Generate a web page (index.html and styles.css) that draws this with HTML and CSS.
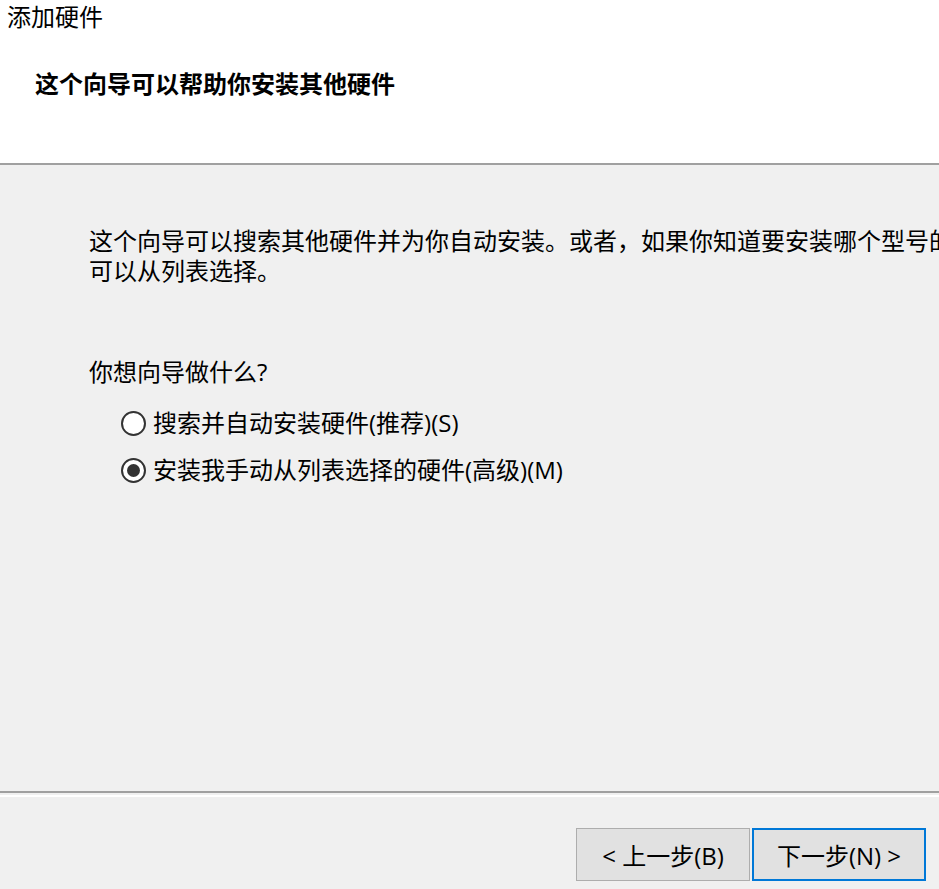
FILE: index.html
```html
<!DOCTYPE html>
<html lang="zh-CN">
<head>
    <meta charset="UTF-8">
    <title>添加硬件</title>
    <link rel="stylesheet" href="styles.css">
</head>
<body>
    <div class="header">
        <div class="window-title">添加硬件</div>
        <div class="heading">这个向导可以帮助你安装其他硬件</div>
    </div>
    <div class="content">
        <p class="intro">这个向导可以搜索其他硬件并为你自动安装。或者，如果你知道要安装哪个型号的<br>可以从列表选择。</p>

        <div class="question">你想向导做什么?</div>
        <div class="options">
            <div class="option">
                <span class="radio"></span>
                <span>搜索并自动安装硬件(推荐)(S)</span>
            </div>
            <div class="option">
                <span class="radio checked"></span>
                <span>安装我手动从列表选择的硬件(高级)(M)</span>
            </div>
        </div>
    </div>
    <div class="footer">
        <button class="btn">&lt; 上一步(B)</button>
        <button class="btn default">下一步(N) &gt;</button>
    </div>
</body>
</html>
```

FILE: styles.css
```css
html, body {
    margin: 0;
    padding: 0;
}
body {
    width: 939px;
    height: 889px;
    overflow: hidden;
    font-family: "Open Sans", "Noto Sans CJK SC", sans-serif;
    font-size: 24px;
    line-height: 30px;
    color: #000;
    background-color: #f0f0f0;
}
.header {
    background-color: #fff;
    height: 163px;
    border-bottom: 2px solid #a0a0a0;
    box-sizing: content-box;
}
.window-title {
    padding: 2px 0 0 7px;
}
.heading {
    font-weight: bold;
    margin: 37px 0 0 35px;
}
.content {
    height: 626px;
    padding-left: 89px;
    overflow: hidden;
}
.intro {
    margin: 61px 0 0 0;
    white-space: nowrap;
}
.question {
    margin-top: 71px;
}
.options {
    margin-top: 21px;
    padding-left: 32px;
    display: flex;
    flex-direction: column;
    gap: 17px;
}
.option {
    display: flex;
    align-items: center;
    gap: 7px;
}
.radio {
    width: 21px;
    height: 21px;
    border: 2px solid #333;
    border-radius: 50%;
    background: #fff;
    display: flex;
    align-items: center;
    justify-content: center;
}
.radio.checked::after {
    content: "";
    width: 13px;
    height: 13px;
    border-radius: 50%;
    background: #333;
}
.footer {
    height: 94px;
    border-top: 2px solid #a0a0a0;
    background: linear-gradient(#f0f0f0 2px, #fff 2px, #fff 4px, #f0f0f0 4px);
    display: flex;
    justify-content: flex-end;
    align-items: flex-start;
    gap: 2px;
    padding: 35px 13px 0 0;
    box-sizing: border-box;
}
.btn {
    width: 174px;
    height: 53px;
    font-family: inherit;
    font-size: 24px;
    color: #000;
    background: #e1e1e1;
    border: 1px solid #adadad;
    padding: 0;
}
.btn.default {
    border: 2px solid #0078d7;
}
```
